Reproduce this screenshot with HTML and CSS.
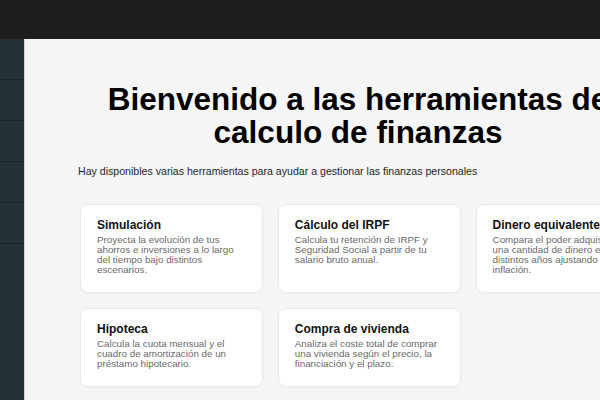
FILE: index.html
```html
<!DOCTYPE html>
<html lang="es">
<head>
<meta charset="utf-8">
<title>Herramientas de finanzas</title>
<link rel="stylesheet" href="styles.css">
</head>
<body>
<div class="app">
  <header class="topbar"></header>
  <div class="layout">
    <nav class="sidebar">
      <div class="side-item"></div>
      <div class="side-item"></div>
      <div class="side-item"></div>
      <div class="side-item"></div>
      <div class="side-item"></div>
    </nav>
    <main class="main">
      <div class="container">
        <h1 class="title">Bienvenido a las herramientas de calculo de finanzas</h1>
        <p class="subtitle">Hay disponibles varias herramientas para ayudar a gestionar las finanzas personales</p>
        <div class="cards">
          <div class="card">
            <h2 class="card-title">Simulación</h2>
            <p class="card-text">Proyecta la evolución de tus ahorros e inversiones a lo largo del tiempo bajo distintos escenarios.</p>
          </div>
          <div class="card">
            <h2 class="card-title">Cálculo del IRPF</h2>
            <p class="card-text">Calcula tu retención de IRPF y Seguridad Social a partir de tu salario bruto anual.</p>
          </div>
          <div class="card">
            <h2 class="card-title">Dinero equivalente</h2>
            <p class="card-text">Compara el poder adquisitivo de una cantidad de dinero entre distintos años ajustando por la inflación.</p>
          </div>
          <div class="card">
            <h2 class="card-title">Hipoteca</h2>
            <p class="card-text">Calcula la cuota mensual y el cuadro de amortización de un préstamo hipotecario.</p>
          </div>
          <div class="card">
            <h2 class="card-title">Compra de vivienda</h2>
            <p class="card-text">Analiza el coste total de comprar una vivienda según el precio, la financiación y el plazo.</p>
          </div>
        </div>
      </div>
    </main>
  </div>
</div>
</body>
</html>
```

FILE: styles.css
```css
html, body {
  margin: 0;
  padding: 0;
  width: 600px;
  height: 400px;
  overflow: hidden;
  font-family: "Liberation Sans", Arial, Helvetica, sans-serif;
}

.app {
  display: flex;
  flex-direction: column;
  width: 600px;
  height: 400px;
}

.topbar {
  height: 39px;
  flex: none;
  background: #1d1d1d;
}

.layout {
  flex: 1;
  display: flex;
  min-height: 0;
}

.sidebar {
  width: 24px;
  flex: none;
  background: #263137;
  display: flex;
  flex-direction: column;
}

.side-item {
  height: 40px;
  border-bottom: 1px solid #192126;
}

.main {
  flex: 1;
  min-width: 0;
  background: #f5f5f5;
  border-left: 1px solid #d4d6d7;
  overflow: hidden;
  padding: 44px 0 0 53px;
}

.container {
  width: 560px;
}

.title {
  margin: 0;
  font-size: 31.5px;
  line-height: 33px;
  font-weight: 700;
  color: #000;
  text-align: center;
}

.subtitle {
  margin: 16px 0 0;
  font-size: 10.6px;
  line-height: 13px;
  color: #1e1e1e;
}

.cards {
  margin: 26px 0 0 2px;
  display: grid;
  grid-template-columns: repeat(3, 183.3px);
  column-gap: 14.5px;
  row-gap: 15px;
}

.card {
  background: #fff;
  border: 1px solid #e9e9e9;
  border-radius: 8px;
  box-shadow: 0 1px 2px rgba(0, 0, 0, 0.03);
  padding: 13px 16px 17px;
}

.card-title {
  margin: 0 0 3px;
  font-size: 12px;
  line-height: 14px;
  font-weight: 700;
  color: #111;
}

.card-text {
  margin: 0;
  font-size: 9.8px;
  line-height: 10px;
  color: #6a6a6a;
}
```
